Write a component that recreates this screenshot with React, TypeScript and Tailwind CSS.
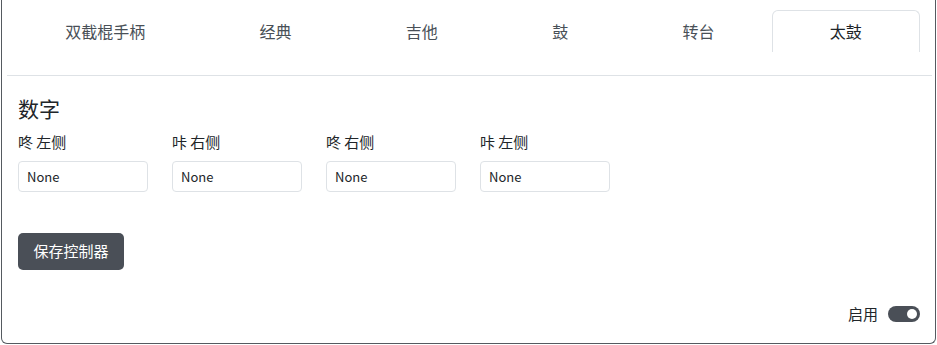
const tabs = ['双截棍手柄', '经典', '吉他', '鼓', '转台', '太鼓'];

const fields = ['咚 左侧', '咔 右侧', '咚 右侧', '咔 左侧'];

export default function App() {
  return (
    <div
      className="h-[345px] w-[937px] overflow-hidden bg-white"
      style={{ fontFamily: '"Noto Sans CJK SC", "Noto Sans", sans-serif' }}
    >
      <div className="ml-px h-[344px] w-[935px] rounded-b-md border-x border-b border-[#555a60] flex flex-col">
        {/* Tabs */}
        <div className="pt-[10px] pl-[6px] pr-[15px] flex">
          {tabs.map((t, i) => {
            const active = i === tabs.length - 1;
            return (
              <div
                key={t}
                className={`flex-auto h-[42px] px-4 pb-[1px] flex items-center justify-center text-[16px] ${
                  active
                    ? 'rounded-t-md border-x border-t border-[#dee2e6] text-[#212529]'
                    : 'text-[#495057]'
                }`}
              >
                {t}
              </div>
            );
          })}
        </div>
        <div className="mt-[23px] ml-[5px] mr-[3px] border-t border-[#dee2e6]" />

        {/* Content */}
        <div className="pl-[16px] pr-[15px] pt-[18px] flex flex-col flex-1">
          <h2 className="text-[21px] leading-[28px] text-[#212529]">数字</h2>
          <div className="mt-[9px] flex gap-[24px]">
            {fields.map((f) => (
              <div key={f} className="flex flex-col">
                <label className="text-[15px] leading-[22px] text-[#212529]">{f}</label>
                <div className="mt-[8px] h-[31px] w-[130px] rounded-[4px] border border-[#dee2e6] px-[8px] flex items-center text-[13px] text-[#212529]">
                  None
                </div>
              </div>
            ))}
          </div>
          <div className="mt-[41px]">
            <button className="h-[37px] w-[106px] rounded-[5px] bg-[#4a4f57] text-[15px] text-white">
              保存控制器
            </button>
          </div>
          <div className="mt-[33px] flex items-center justify-end gap-[10px]">
            <span className="text-[15px] text-[#212529]">启用</span>
            <div className="h-[16px] w-[32px] rounded-full bg-[#4a4f57] flex items-center justify-end pr-[3px]">
              <div className="h-[10px] w-[10px] rounded-full bg-white" />
            </div>
          </div>
        </div>
      </div>
    </div>
  );
}
